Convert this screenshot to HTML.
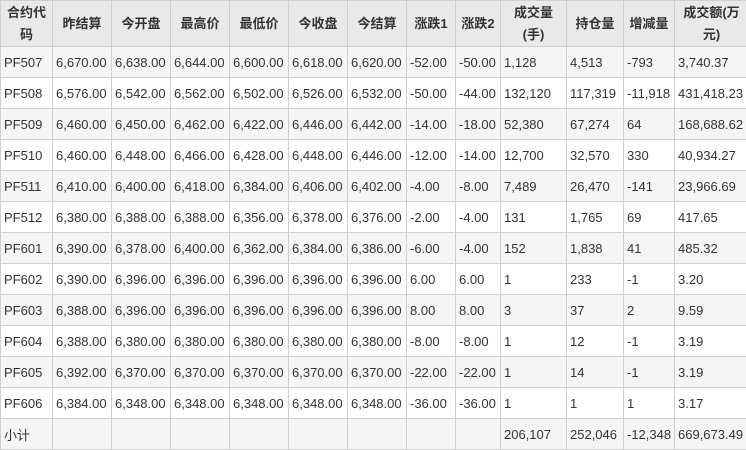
<!DOCTYPE html>
<html><head><meta charset="utf-8"><style>
body{margin:0;background:#fff;width:746px;height:443px;overflow:hidden}
table{border-collapse:collapse;table-layout:fixed;width:748px;font-family:"Liberation Sans","Noto Sans CJK SC",sans-serif;font-size:13px;color:#333}
td,th{border:1px solid #cfcfcf;padding:0 0 0 3px;height:30px;white-space:nowrap;overflow:hidden;text-align:left}
th{background:#e9e9e9;font-weight:bold;text-align:center;height:45px;line-height:22px;padding:0 1px;font-size:13px}
tr.o td{background:#f5f5f5}
</style></head><body>
<table>
<colgroup><col style="width:52px"><col style="width:59px"><col style="width:59px"><col style="width:59px"><col style="width:59px"><col style="width:59px"><col style="width:59px"><col style="width:49px"><col style="width:45px"><col style="width:66px"><col style="width:57px"><col style="width:51px"><col style="width:74px"></colgroup>
<tr><th>合约代<br>码</th><th>昨结算</th><th>今开盘</th><th>最高价</th><th>最低价</th><th>今收盘</th><th>今结算</th><th>涨跌1</th><th>涨跌2</th><th>成交量<br>(手)</th><th>持仓量</th><th>增减量</th><th>成交额(万<br>元)</th></tr>
<tr class="o"><td>PF507</td><td>6,670.00</td><td>6,638.00</td><td>6,644.00</td><td>6,600.00</td><td>6,618.00</td><td>6,620.00</td><td>-52.00</td><td>-50.00</td><td>1,128</td><td>4,513</td><td>-793</td><td>3,740.37</td></tr>
<tr><td>PF508</td><td>6,576.00</td><td>6,542.00</td><td>6,562.00</td><td>6,502.00</td><td>6,526.00</td><td>6,532.00</td><td>-50.00</td><td>-44.00</td><td>132,120</td><td>117,319</td><td>-11,918</td><td>431,418.23</td></tr>
<tr class="o"><td>PF509</td><td>6,460.00</td><td>6,450.00</td><td>6,462.00</td><td>6,422.00</td><td>6,446.00</td><td>6,442.00</td><td>-14.00</td><td>-18.00</td><td>52,380</td><td>67,274</td><td>64</td><td>168,688.62</td></tr>
<tr><td>PF510</td><td>6,460.00</td><td>6,448.00</td><td>6,466.00</td><td>6,428.00</td><td>6,448.00</td><td>6,446.00</td><td>-12.00</td><td>-14.00</td><td>12,700</td><td>32,570</td><td>330</td><td>40,934.27</td></tr>
<tr class="o"><td>PF511</td><td>6,410.00</td><td>6,400.00</td><td>6,418.00</td><td>6,384.00</td><td>6,406.00</td><td>6,402.00</td><td>-4.00</td><td>-8.00</td><td>7,489</td><td>26,470</td><td>-141</td><td>23,966.69</td></tr>
<tr><td>PF512</td><td>6,380.00</td><td>6,388.00</td><td>6,388.00</td><td>6,356.00</td><td>6,378.00</td><td>6,376.00</td><td>-2.00</td><td>-4.00</td><td>131</td><td>1,765</td><td>69</td><td>417.65</td></tr>
<tr class="o"><td>PF601</td><td>6,390.00</td><td>6,378.00</td><td>6,400.00</td><td>6,362.00</td><td>6,384.00</td><td>6,386.00</td><td>-6.00</td><td>-4.00</td><td>152</td><td>1,838</td><td>41</td><td>485.32</td></tr>
<tr><td>PF602</td><td>6,390.00</td><td>6,396.00</td><td>6,396.00</td><td>6,396.00</td><td>6,396.00</td><td>6,396.00</td><td>6.00</td><td>6.00</td><td>1</td><td>233</td><td>-1</td><td>3.20</td></tr>
<tr class="o"><td>PF603</td><td>6,388.00</td><td>6,396.00</td><td>6,396.00</td><td>6,396.00</td><td>6,396.00</td><td>6,396.00</td><td>8.00</td><td>8.00</td><td>3</td><td>37</td><td>2</td><td>9.59</td></tr>
<tr><td>PF604</td><td>6,388.00</td><td>6,380.00</td><td>6,380.00</td><td>6,380.00</td><td>6,380.00</td><td>6,380.00</td><td>-8.00</td><td>-8.00</td><td>1</td><td>12</td><td>-1</td><td>3.19</td></tr>
<tr class="o"><td>PF605</td><td>6,392.00</td><td>6,370.00</td><td>6,370.00</td><td>6,370.00</td><td>6,370.00</td><td>6,370.00</td><td>-22.00</td><td>-22.00</td><td>1</td><td>14</td><td>-1</td><td>3.19</td></tr>
<tr><td>PF606</td><td>6,384.00</td><td>6,348.00</td><td>6,348.00</td><td>6,348.00</td><td>6,348.00</td><td>6,348.00</td><td>-36.00</td><td>-36.00</td><td>1</td><td>1</td><td>1</td><td>3.17</td></tr>
<tr class="o"><td>小计</td><td></td><td></td><td></td><td></td><td></td><td></td><td></td><td></td><td>206,107</td><td>252,046</td><td>-12,348</td><td>669,673.49</td></tr>
</table>
</body></html>
